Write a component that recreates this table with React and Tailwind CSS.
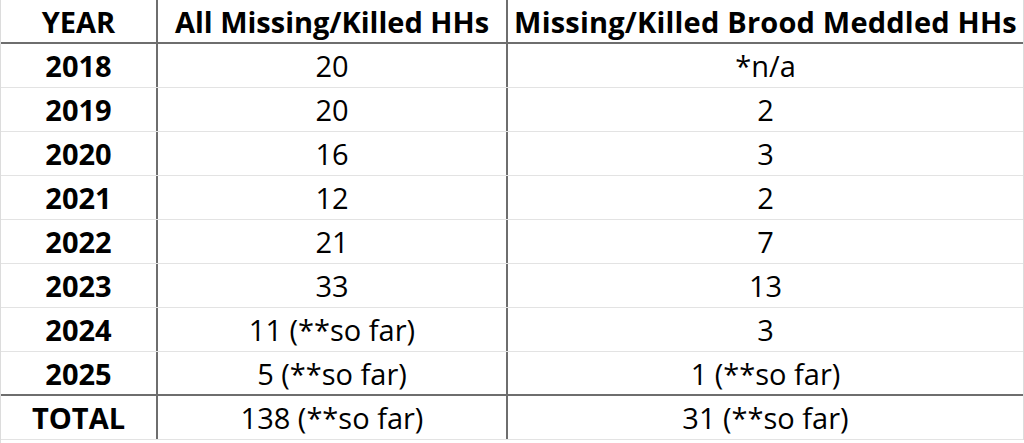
import React from "react";

const rows = [
  ["2018", "20", "*n/a"],
  ["2019", "20", "2"],
  ["2020", "16", "3"],
  ["2021", "12", "2"],
  ["2022", "21", "7"],
  ["2023", "33", "13"],
  ["2024", "11 (**so far)", "3"],
  ["2025", "5 (**so far)", "1 (**so far)"],
];

export default function App() {
  return (
    <div
      className="w-[1024px] h-[443px] bg-white text-black overflow-hidden border-l border-[#dcdcdc]"
      style={{ fontFamily: "'Open Sans', Lato, sans-serif" }}
    >
      <div className="border-r border-[#dcdcdc]">
        <div className="grid grid-cols-[157px_350px_1fr] h-[44px] border-b-2 border-[#6e6e6e] text-[29px] font-bold leading-none">
          <div className="flex items-center justify-center border-r-2 border-[#6e6e6e]">YEAR</div>
          <div className="flex items-center justify-center border-r-2 border-[#6e6e6e]">All Missing/Killed HHs</div>
          <div className="flex items-center justify-center tracking-[0.2px]">Missing/Killed Brood Meddled HHs</div>
        </div>
        {rows.map((r, i) => (
          <div
            key={r[0]}
            className={
              "grid grid-cols-[157px_350px_1fr] h-[44px] text-[29px] leading-none " +
              (i === rows.length - 1 ? "border-b-2 border-[#6e6e6e]" : "border-b border-[#e3e3e3]")
            }
          >
            <div className="flex items-center justify-center border-r-2 border-[#6e6e6e] font-bold">{r[0]}</div>
            <div className="flex items-center justify-center border-r-2 border-[#6e6e6e]">{r[1]}</div>
            <div className="flex items-center justify-center">{r[2]}</div>
          </div>
        ))}
        <div className="grid grid-cols-[157px_350px_1fr] h-[44px] text-[29px] leading-none border-b border-[#e3e3e3]">
          <div className="flex items-center justify-center border-r-2 border-[#6e6e6e] font-bold">TOTAL</div>
          <div className="flex items-center justify-center border-r-2 border-[#6e6e6e]">138 (**so far)</div>
          <div className="flex items-center justify-center">31 (**so far)</div>
        </div>
      </div>
    </div>
  );
}
